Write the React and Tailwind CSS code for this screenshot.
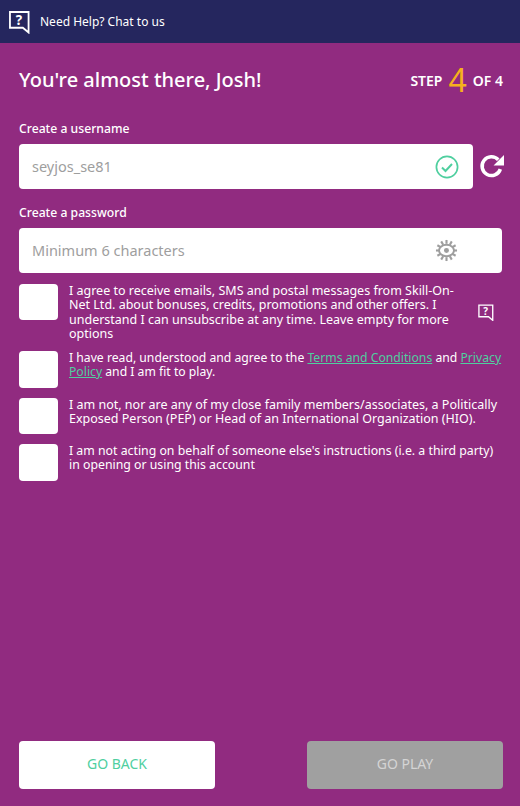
import React from 'react';

const font = "font-['Noto_Sans',sans-serif]";

const HelpIcon = ({ className }) => (
  <svg viewBox="0 0 22 24" fill="none" className={className}>
    <path d="M1 1.5h19.5v21.5l-6-5H1z" stroke="white" strokeWidth="1.9" strokeLinejoin="miter" />
    <text x="10.5" y="15" textAnchor="middle" fontSize="14" fontWeight="700" fill="white" fontFamily="Noto Sans, sans-serif">?</text>
  </svg>
);

const rays = [0, 30, 60, 90, 120, 150, 180, 210, 240, 270, 300, 330];

const EyeGear = () => (
  <svg viewBox="0 0 24 24" className="w-[23px] h-[23px] shrink-0" fill="none" stroke="#9e9e9e">
    <ellipse cx="12" cy="12" rx="7.8" ry="6" strokeWidth="2" />
    <circle cx="12" cy="12" r="2.6" fill="#9e9e9e" stroke="none" />
    {rays.map((r) => (
      <path key={r} d="M12 1v4" strokeWidth="2.2" transform={`rotate(${r} 12 12)`} />
    ))}
  </svg>
);

const Row = ({ children, extra, h = 'h-[36px]', size = 'text-[12.5px]' }) => (
  <div className="flex items-start">
    <div className={`w-[39px] ${h} bg-white rounded-[4px] shrink-0`} />
    <div className={`ml-[11px] flex-1 ${size} leading-[14.25px] text-white`}>{children}</div>
    {extra}
  </div>
);

export default function App() {
  return (
    <div className={`w-[520px] h-[806px] bg-[#912b80] flex flex-col ${font}`}>
      <div className="h-[43px] bg-[#25265e] flex items-center px-[9px] shrink-0">
        <HelpIcon className="w-[21px] h-[24px]" />
        <span className="ml-[10px] text-[12px] text-white">Need Help? Chat to us</span>
      </div>

      <div className="flex-1 flex flex-col px-[19px]">
        <div className="flex items-center justify-between h-[40px] mt-[17px] -mr-[2px]">
          <h1 className="text-[20px] font-medium text-white">You're almost there, Josh!</h1>
          <div className="flex items-center text-white text-[14px] font-semibold">
            <span>STEP</span>
            <span className="mx-[6px] text-[32px] leading-none font-normal text-[#f6b11c]">4</span>
            <span>OF 4</span>
          </div>
        </div>

        <label className="mt-[20px] h-[18px] text-[12.2px] leading-[18px] font-medium text-white">Create a username</label>
        <div className="mt-[6px] flex items-center">
          <div className="w-[454px] h-[45px] shrink-0 bg-white rounded-[4px] flex items-center justify-between pl-[13px] pr-[14px]">
            <span className="text-[14.5px] text-[#9e9e9e]">seyjos_se81</span>
            <svg viewBox="0 0 24 24" className="w-[24px] h-[24px]" fill="none" stroke="#4fcf9f" strokeWidth="1.7">
              <circle cx="12" cy="12" r="10.6" />
              <path d="M7 12.5l3.5 3.5 6.5-7" strokeWidth="2" />
            </svg>
          </div>
          <svg viewBox="0 0 24 24" className="ml-[6px] w-[25px] h-[25px] shrink-0" fill="none" stroke="white" strokeWidth="3.4">
            <path d="M20.5 14.5A9 9 0 1 1 18.5 5.5" />
            <path d="M24 1v10H14z" fill="white" stroke="none" />
          </svg>
        </div>

        <label className="mt-[15px] h-[18px] text-[12.2px] leading-[18px] font-medium text-white">Create a password</label>
        <div className="mt-[6px] w-[483px] h-[45px] bg-white rounded-[4px] flex items-center justify-between pl-[13px] pr-[44px]">
          <span className="text-[14.5px] text-[#9e9e9e]">Minimum 6 characters</span>
          <EyeGear />
        </div>

        <div className="mt-[11px] flex flex-col gap-[10px] w-[484px]">
          <Row extra={<div className="w-[42px] pt-[20px] pr-[9px] flex justify-end shrink-0"><HelpIcon className="w-[16px] h-[17px]" /></div>}>
            I agree to receive emails, SMS and postal messages from Skill-On-Net Ltd. about bonuses, credits, promotions and other offers. I understand I can unsubscribe at any time. Leave empty for more options
          </Row>
          <Row h="h-[37px]" size="text-[12.2px]">
            I have read, understood and agree to the <a className="text-[#4fcf9f] underline">Terms and Conditions</a> and <a className="text-[#4fcf9f] underline">Privacy Policy</a> and I am fit to play.
          </Row>
          <Row>
            I am not, nor are any of my close family members/associates, a Politically Exposed Person (PEP) or Head of an International Organization (HIO).
          </Row>
          <Row h="h-[37px]" size="text-[12.3px]">
            I am not acting on behalf of someone else's instructions (i.e. a third party) in opening or using this account
          </Row>
        </div>

        <div className="mt-auto mb-[17px] flex justify-between w-[484px]">
          <button className="w-[196px] h-[48px] pb-[3px] bg-white rounded-[4px] text-[14px] text-[#4fcf9f]">GO BACK</button>
          <button className="w-[196px] h-[48px] pb-[3px] bg-[#a0a0a0] rounded-[4px] text-[14px] text-[#d4d4d4]">GO PLAY</button>
        </div>
      </div>
    </div>
  );
}
